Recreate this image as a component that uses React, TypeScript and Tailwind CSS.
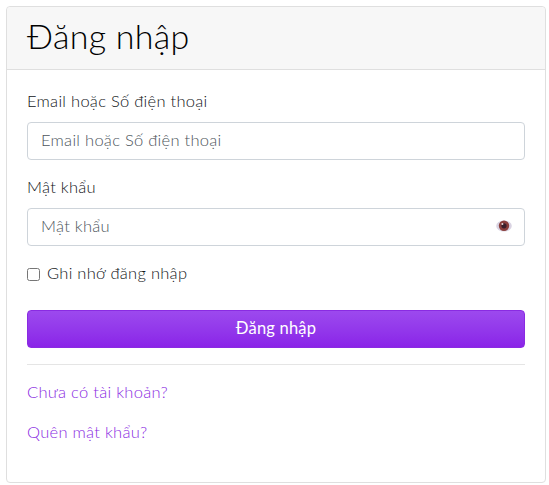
import { useState } from 'react';

function EyeIcon() {
  return (
    <svg width="16" height="14" viewBox="0 0 16 14" className="block">
      <ellipse cx="8" cy="7" rx="7.8" ry="5.6" fill="#d9d3e2" />
      <circle cx="8" cy="6.8" r="5.2" fill="#8a3f3c" />
      <circle cx="8" cy="6.8" r="2.6" fill="#3a1f2a" />
      <circle cx="6.4" cy="5" r="1" fill="#e8d8d8" />
    </svg>
  );
}

export default function App() {
  const [remember, setRemember] = useState(false);

  return (
    <div className="min-h-[485px] bg-white px-[6px] pt-[6px] font-['Lato','Noto_Sans',sans-serif] text-[16.5px] leading-6 font-light tracking-[0.28px] text-[#111418]">
      <div className="h-[477px] w-[540px] rounded border border-[#dfdfdf] bg-white">
        {/* Header */}
        <div className="h-[63px] rounded-t border-b border-[#dfdfdf] bg-[#f7f7f7] px-5 pt-[10px]">
          <h3 className="text-[34px] leading-[38px] font-light tracking-[0.3px] text-[#000000]">Đăng nhập</h3>
        </div>

        {/* Form */}
        <form className="p-5" onSubmit={(e) => e.preventDefault()}>
          <div className="mb-4">
            <label className="mb-[10px] block leading-[22px]">Email hoặc Số điện thoại</label>
            <input
              type="text"
              placeholder="Email hoặc Số điện thoại"
              className="h-[38px] w-full rounded border border-[#ced4da] px-[13px] pb-[2px] font-light text-[#495057] placeholder:text-[#4d555c] focus:outline-none"
            />
          </div>

          <div className="mb-4">
            <label className="mb-[10px] block leading-[22px]">Mật khẩu</label>
            <div className="relative">
              <input
                type="password"
                placeholder="Mật khẩu"
                className="h-[38px] w-full rounded border border-[#ced4da] px-[13px] pb-[2px] font-light text-[#495057] placeholder:text-[#4d555c] focus:outline-none"
              />
              <span className="absolute top-[11px] right-[13px]">
                <EyeIcon />
              </span>
            </div>
          </div>

          <label className="mb-6 flex h-6 items-center gap-[7px]">
            <input
              type="checkbox"
              checked={remember}
              onChange={(e) => setRemember(e.target.checked)}
              className="m-0 h-[13px] w-[13px]"
            />
            <span className="pb-[2px]">Ghi nhớ đăng nhập</span>
          </label>

          <button
            type="submit"
            className="block h-[38px] w-full rounded border border-[#8a2be2] bg-gradient-to-b from-[#9c49ee] to-[#8a23e8] pb-[2px] text-center font-normal tracking-[0.2px] text-white"
          >
            Đăng nhập
          </button>

          <hr className="mt-4 mb-[15px] border-t border-[#e5e5e5]" />

          <div className="mb-4 h-6">
            <a href="#" className="text-[#8a2be2]">Chưa có tài khoản?</a>
          </div>
          <div className="h-6">
            <a href="#" className="text-[#8a2be2]">Quên mật khẩu?</a>
          </div>
        </form>
      </div>
    </div>
  );
}
